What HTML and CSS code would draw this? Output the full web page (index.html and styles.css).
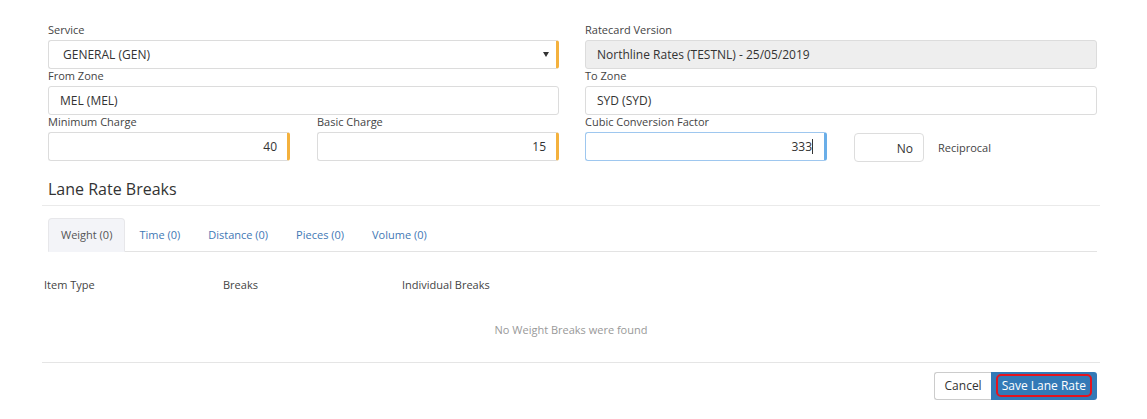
FILE: index.html
```html
<!DOCTYPE html>
<html>
<head>
<meta charset="utf-8">
<link rel="stylesheet" href="styles.css">
</head>
<body>
<div class="page">
  <div class="form">
    <div class="field">
      <div class="label">Service</div>
      <div class="input select warn"><span>GENERAL (GEN)</span><span class="caret"></span></div>
    </div>
    <div class="field">
      <div class="label">Ratecard Version</div>
      <div class="input disabled">Northline Rates (TESTNL) - 25/05/2019</div>
    </div>
    <div class="field">
      <div class="label">From Zone</div>
      <div class="input">MEL (MEL)</div>
    </div>
    <div class="field">
      <div class="label">To Zone</div>
      <div class="input">SYD (SYD)</div>
    </div>
    <div class="split">
      <div class="field">
        <div class="label">Minimum Charge</div>
        <div class="input num warn">40</div>
      </div>
      <div class="field">
        <div class="label">Basic Charge</div>
        <div class="input num warn">15</div>
      </div>
    </div>
    <div class="split">
      <div class="field">
        <div class="label">Cubic Conversion Factor</div>
        <div class="input num focus">333<span class="cursor"></span></div>
      </div>
      <div class="recip">
        <div class="toggle">No</div>
        <div class="recip-label">Reciprocal</div>
      </div>
    </div>
  </div>

  <h2 class="section">Lane Rate Breaks</h2>

  <div class="tabs">
    <div class="tab active">Weight (0)</div>
    <div class="tab">Time (0)</div>
    <div class="tab">Distance (0)</div>
    <div class="tab">Pieces (0)</div>
    <div class="tab">Volume (0)</div>
  </div>

  <div class="thead">
    <div>Item Type</div>
    <div>Breaks</div>
    <div>Individual Breaks</div>
  </div>
  <div class="empty">No Weight Breaks were found</div>

  <div class="footer">
    <div class="btn cancel">Cancel</div>
    <div class="btn save"><span>Save Lane Rate</span></div>
  </div>
</div>
</body>
</html>
```

FILE: styles.css
```css
* { box-sizing: border-box; }
html, body { margin: 0; background: #fff; }
body {
  font-family: "Open Sans", "Liberation Sans", sans-serif;
  color: #333;
  font-size: 12px;
}
.page {
  margin-left: 42px;
  width: 1058px;
  padding-top: 23px;
}
.form {
  padding-left: 6px;
  display: grid;
  grid-template-columns: 511px 512px;
  column-gap: 26px;
}
.label {
  font-size: 11px;
  line-height: 14px;
  height: 17px;
  color: #444;
}
.input {
  height: 29px;
  border: 1px solid #dcdcdc;
  border-radius: 3px;
  padding: 0 11px;
  font-size: 12px;
  line-height: 27px;
  color: #333;
  background: #fff;
  white-space: nowrap;
}
.select {
  display: flex;
  justify-content: space-between;
  align-items: center;
  padding-left: 14px;
  padding-right: 7px;
}
.caret {
  width: 0;
  height: 0;
  border-left: 3px solid transparent;
  border-right: 3px solid transparent;
  border-top: 5px solid #333;
}
.disabled { background: #eeeeee; }
.warn { border-right: 3px solid #f4b13d; }
.num { text-align: right; }
.warn.num { padding-right: 10px; }
.focus {
  border-color: #9ec7ef;
  border-right: 3px solid #6aaee8;
  padding-right: 11px;
}
.cursor {
  display: inline-block;
  width: 1px;
  height: 15px;
  background: #333;
  vertical-align: -3px;
}
.split {
  display: grid;
  grid-template-columns: 242px 242px;
  column-gap: 27px;
}
.recip {
  display: flex;
  align-items: center;
  padding-top: 18px;
}
.toggle {
  width: 70px;
  height: 29px;
  border: 1px solid #ddd;
  border-radius: 4px;
  text-align: right;
  padding-right: 10px;
  line-height: 30px;
  font-size: 12px;
}
.recip-label {
  font-size: 11px;
  color: #444;
  margin-left: 14px;
  margin-top: -1px;
}
.section {
  margin: 17px 0 0 0;
  padding: 0 0 5px 6px;
  font-size: 16px;
  font-weight: 400;
  line-height: 21px;
  color: #333;
  border-bottom: 1px solid #eaeaea;
}
.tabs {
  display: flex;
  margin: 12px 3px 0 6px;
  border-bottom: 1px solid #e3e3e3;
  height: 34px;
}
.tab {
  padding: 0 13px;
  line-height: 32px;
  font-size: 11px;
  color: #3f78b5;
  border: 1px solid transparent;
  border-radius: 4px 4px 0 0;
}
.tab.active {
  color: #555;
  background: #f3f4f8;
  border-color: #e7e7ea;
  border-bottom-color: #f3f4f8;
  height: 34px;
  padding: 0 12px;
}
.thead {
  display: grid;
  grid-template-columns: 179px 179px 300px;
  padding-left: 2px;
  margin-top: 25px;
  font-size: 11px;
  color: #444;
  line-height: 16px;
}
.empty {
  text-align: center;
  font-size: 11px;
  color: #999;
  margin-top: 29px;
  line-height: 16px;
  padding-bottom: 24px;
  border-bottom: 1px solid #e5e5e5;
}
.footer {
  display: flex;
  justify-content: flex-end;
  padding-top: 9px;
  padding-right: 3px;
}
.btn {
  height: 28px;
  font-size: 12px;
  line-height: 26px;
}
.cancel {
  border: 1px solid #ccc;
  border-right: none;
  border-radius: 3px 0 0 3px;
  padding: 0 9px 0 10px;
  color: #333;
  background: #fff;
}
.save {
  background: #337ab7;
  border-radius: 0 3px 3px 0;
  padding: 2px 5px 3px 5px;
  color: #fff;
}
.save span {
  display: block;
  height: 23px;
  line-height: 19px;
  border: 2px solid #e4141e;
  border-radius: 5px;
  padding: 0 4px;
}
```
